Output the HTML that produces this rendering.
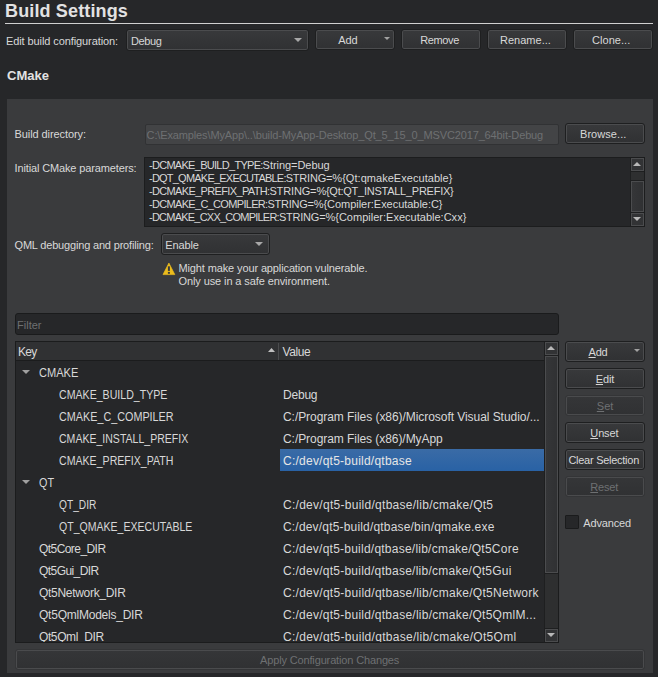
<!DOCTYPE html>
<html lang="en"><head><meta charset="utf-8"><title>Build Settings</title>
<style>
html,body{margin:0;padding:0;background:#262729;}
body{width:658px;height:677px;position:relative;overflow:hidden;font-family:"Liberation Sans",sans-serif;}
div,svg{position:absolute;box-sizing:border-box;}
.t{white-space:pre;}
.t u{text-decoration:underline;text-underline-offset:1px;}
.btn{border:1px solid #1e1f20;border-radius:3px;background:linear-gradient(#38393b,#303133);box-shadow:inset 0 0 0 1px #4b4c4e;}
  .btn.dis{border-color:#343537;background:linear-gradient(#353638,#303133);box-shadow:inset 0 0 0 1px #4a4b4d;}
.le{border:1px solid #1a1b1c;border-radius:2px;background:#262729;}
.le.dis{border-color:#313234;background:#434446;}
.ta{border:1px solid #1c1d1e;background:#262729;}
.flt{border:1px solid #1a1b1c;border-radius:3px;background:#262729;}
.tree{border:1px solid #1b1c1d;background:#262729;}
.clip{overflow:hidden;}
.sbt{background:#2e2f30;border-left:1px solid #1f2021;}
.sbb{background:#323335;border:1px solid #4b4c4e;}
.sbh{background:linear-gradient(90deg,#353638,#303133);border:1px solid #4b4c4e;}
.cb{border:1px solid #1a1b1c;background:#262729;border-radius:1px;}
</style></head>
<body>
<div class="t" style="left:5px;top:0.36px;font-size:18px;line-height:22px;height:22px;color:#e2e2e2;font-weight:bold;letter-spacing:0.143px;">Build Settings</div>
<div class="r" style="left:5px;top:23px;width:648px;height:1px;background:#d0d0d0"></div>
<div class="t" style="left:6px;top:33.69px;font-size:11px;line-height:15px;height:15px;color:#d8d8d8;letter-spacing:-0.094px;">Edit build configuration:</div>
<div class="btn" style="left:126px;top:29px;width:183px;height:22px;"></div>
<div class="t" style="left:131px;top:33.69px;font-size:11px;line-height:15px;height:15px;color:#d8d8d8;letter-spacing:-0.383px;">Debug</div>
<svg class="a" style="left:294px;top:38px" width="8" height="4" viewBox="0 0 8 4"><polygon points="0,0 8,0 4.0,4" fill="#a8a8a8"/></svg>
<div class="btn" style="left:315px;top:29px;width:80px;height:21px;"></div>
<div class="t" style="left:338.2px;top:32.69px;font-size:11px;line-height:15px;height:15px;color:#d8d8d8;letter-spacing:-0.024px;">Add</div>
<svg class="a" style="left:384px;top:37px" width="6" height="3" viewBox="0 0 6 3"><polygon points="0,0 6,0 3.0,3" fill="#a2a2a2"/></svg>
<div class="btn" style="left:401px;top:29px;width:80px;height:21px;"></div>
<div class="t" style="left:420.3px;top:32.69px;font-size:11px;line-height:15px;height:15px;color:#d8d8d8;letter-spacing:-0.393px;">Remove</div>
<div class="btn" style="left:487px;top:29px;width:80px;height:21px;"></div>
<div class="t" style="left:500px;top:32.69px;font-size:11px;line-height:15px;height:15px;color:#d8d8d8;letter-spacing:0.017px;">Rename...</div>
<div class="btn" style="left:573px;top:29px;width:80px;height:21px;"></div>
<div class="t" style="left:592px;top:32.69px;font-size:11px;line-height:15px;height:15px;color:#d8d8d8;letter-spacing:0.049px;">Clone...</div>
<div class="t" style="left:7px;top:67.00px;font-size:13px;line-height:17px;height:17px;color:#e2e2e2;font-weight:bold;letter-spacing:0.018px;">CMake</div>
<div class="r" style="left:7px;top:99px;width:646px;height:574px;background:#3a3b3d"></div>
<div class="t" style="left:14.5px;top:126.69px;font-size:11px;line-height:15px;height:15px;color:#d8d8d8;letter-spacing:-0.078px;">Build directory:</div>
<div class="le dis" style="left:145px;top:124px;width:414px;height:21px;"></div>
<div class="t" style="left:146.6px;top:127.69px;font-size:11px;line-height:15px;height:15px;color:#6e7072;letter-spacing:-0.134px;">C:\Examples\MyApp\..\build-MyApp-Desktop_Qt_5_15_0_MSVC2017_64bit-Debug</div>
<div class="btn" style="left:565px;top:123px;width:80px;height:21px;"></div>
<div class="t" style="left:580px;top:126.69px;font-size:11px;line-height:15px;height:15px;color:#d8d8d8;letter-spacing:0.061px;">Browse...</div>
<div class="t" style="left:14.5px;top:160.69px;font-size:11px;line-height:15px;height:15px;color:#d8d8d8;letter-spacing:-0.133px;">Initial CMake parameters:</div>
<div class="ta" style="left:144px;top:157px;width:501px;height:70px;"></div>
<div class="t" style="left:149px;top:157.69px;font-size:11px;line-height:15px;height:15px;color:#d8d8d8;"><span style="letter-spacing:-0.713px">-DCMAKE_BUILD_TYPE:</span><span style="letter-spacing:-0.048px">String=Debug</span></div>
<div class="t" style="left:149px;top:170.69px;font-size:11px;line-height:15px;height:15px;color:#d8d8d8;"><span style="letter-spacing:-0.779px">-DQT_QMAKE_EXECUTABLE:</span><span style="letter-spacing:-0.197px">STRING=</span><span style="letter-spacing:0.041px">%{Qt:qmakeExecutable}</span></div>
<div class="t" style="left:149px;top:183.69px;font-size:11px;line-height:15px;height:15px;color:#d8d8d8;"><span style="letter-spacing:-0.653px">-DCMAKE_PREFIX_PATH:</span><span style="letter-spacing:-0.140px">STRING=</span><span style="letter-spacing:-0.250px">%{Qt:QT_INSTALL_PREFIX}</span></div>
<div class="t" style="left:149px;top:196.69px;font-size:11px;line-height:15px;height:15px;color:#d8d8d8;"><span style="letter-spacing:-0.680px">-DCMAKE_C_COMPILER:</span><span style="letter-spacing:-0.254px">STRING=</span><span style="letter-spacing:-0.034px">%{Compiler:Executable:C}</span></div>
<div class="t" style="left:149px;top:209.69px;font-size:11px;line-height:15px;height:15px;color:#d8d8d8;"><span style="letter-spacing:-0.771px">-DCMAKE_CXX_COMPILER:</span><span style="letter-spacing:-0.211px">STRING=</span><span style="letter-spacing:0.011px">%{Compiler:Executable:Cxx}</span></div>
<div class="r" style="left:630px;top:158px;width:1px;height:68px;background:#1e1f20"></div>
<div class="r" style="left:631px;top:158px;width:13px;height:68px;background:#2e2f30"></div>
<div class="sbb" style="left:631px;top:158px;width:13px;height:13px;"></div>
<svg class="a" style="left:633px;top:162px" width="8" height="4" viewBox="0 0 8 4"><polygon points="0,4 4.0,0 8,4" fill="#b8b8b8"/></svg>
<div class="r" style="left:631px;top:171px;width:13px;height:1px;background:#1e1f20"></div>
<div class="r" style="left:631px;top:180px;width:13px;height:1px;background:#1e1f20"></div>
<div class="sbh" style="left:631px;top:181px;width:13px;height:31px;"></div>
<div class="r" style="left:631px;top:212px;width:13px;height:1px;background:#1e1f20"></div>
<div class="r" style="left:631px;top:212px;width:13px;height:1px;background:#1e1f20"></div>
<div class="sbb" style="left:631px;top:213px;width:13px;height:13px;"></div>
<svg class="a" style="left:633px;top:217px" width="8" height="4" viewBox="0 0 8 4"><polygon points="0,0 8,0 4.0,4" fill="#b8b8b8"/></svg>
<div class="t" style="left:14.5px;top:238.09px;font-size:11px;line-height:15px;height:15px;color:#d8d8d8;letter-spacing:-0.175px;">QML debugging and profiling:</div>
<div class="btn" style="left:161px;top:233px;width:109px;height:22px;"></div>
<div class="t" style="left:165.3px;top:238.09px;font-size:11px;line-height:15px;height:15px;color:#d8d8d8;letter-spacing:-0.125px;">Enable</div>
<svg class="a" style="left:255px;top:242px" width="8" height="4" viewBox="0 0 8 4"><polygon points="0,0 8,0 4.0,4" fill="#a8a8a8"/></svg>
<svg class="a" style="left:162px;top:262px" width="14" height="14" viewBox="0 0 14 14"><polygon points="6.9,1.1 12.8,12.6 1.0,12.6" fill="#ecbc1c" stroke="#ecbc1c" stroke-width="0.7" stroke-linejoin="round"/><rect x="5.9" y="4.3" width="2" height="4.6" fill="#3a3b3d"/><rect x="5.9" y="9.9" width="2" height="1.9" fill="#3a3b3d"/></svg>
<div class="t" style="left:178.5px;top:260.69px;font-size:11px;line-height:15px;height:15px;color:#d8d8d8;letter-spacing:-0.124px;">Might make your application vulnerable.</div>
<div class="t" style="left:178.5px;top:273.69px;font-size:11px;line-height:15px;height:15px;color:#d8d8d8;letter-spacing:-0.103px;">Only use in a safe environment.</div>
<div class="flt" style="left:15px;top:313px;width:544px;height:22px;"></div>
<div class="t" style="left:17.1px;top:318.09px;font-size:11px;line-height:15px;height:15px;color:#6e7072;letter-spacing:-0.007px;">Filter</div>
<div class="tree" style="left:15px;top:341px;width:544px;height:302px;"></div>
<div class="r" style="left:16px;top:342px;width:528px;height:18px;background:#303133"></div>
<div class="r" style="left:16px;top:360px;width:543px;height:1px;background:#1b1c1d"></div>
<div class="r" style="left:278px;top:343px;width:1px;height:17px;background:#4a4b4d"></div>
<div class="t" style="left:18px;top:343.84px;font-size:12px;line-height:16px;height:16px;color:#d8d8d8;letter-spacing:-0.659px;">Key</div>
<div class="t" style="left:282.5px;top:343.84px;font-size:12px;line-height:16px;height:16px;color:#d8d8d8;letter-spacing:-0.420px;">Value</div>
<svg class="a" style="left:268px;top:348px" width="7" height="4" viewBox="0 0 7 4"><polygon points="0,4 3.5,0 7,4" fill="#c0c0c0"/></svg>
<div class="clip" style="left:16px;top:361px;width:528px;height:281px">
<div class="t" style="left:23px;top:4.44px;font-size:12px;line-height:16px;height:16px;color:#d8d8d8;transform:scaleX(0.9233);transform-origin:0 50%;">CMAKE</div>
<svg class="a" style="left:6px;top:9px" width="8" height="4" viewBox="0 0 8 4"><polygon points="0,0 8,0 4.0,4" fill="#a0a0a0"/></svg>
<div class="t" style="left:43px;top:26.44px;font-size:12px;line-height:16px;height:16px;color:#d8d8d8;transform:scaleX(0.8834);transform-origin:0 50%;">CMAKE_BUILD_TYPE</div>
<div class="t" style="left:267px;top:26.44px;font-size:12px;line-height:16px;height:16px;color:#d8d8d8;letter-spacing:-0.212px;">Debug</div>
<div class="t" style="left:43px;top:48.44px;font-size:12px;line-height:16px;height:16px;color:#d8d8d8;transform:scaleX(0.8998);transform-origin:0 50%;">CMAKE_C_COMPILER</div>
<div class="t" style="left:267px;top:48.44px;font-size:12px;line-height:16px;height:16px;color:#d8d8d8;letter-spacing:-0.054px;">C:/Program Files (x86)/Microsoft Visual Studio/...</div>
<div class="t" style="left:43px;top:70.44px;font-size:12px;line-height:16px;height:16px;color:#d8d8d8;transform:scaleX(0.8780);transform-origin:0 50%;">CMAKE_INSTALL_PREFIX</div>
<div class="t" style="left:267px;top:70.44px;font-size:12px;line-height:16px;height:16px;color:#d8d8d8;letter-spacing:-0.060px;">C:/Program Files (x86)/MyApp</div>
<div class="r" style="left:264px;top:88px;width:264px;height:22px;background:linear-gradient(#3a6ba6,#2962a5)"></div>
<div class="t" style="left:43px;top:92.44px;font-size:12px;line-height:16px;height:16px;color:#d8d8d8;transform:scaleX(0.8828);transform-origin:0 50%;">CMAKE_PREFIX_PATH</div>
<div class="t" style="left:267px;top:92.44px;font-size:12px;line-height:16px;height:16px;color:#e6e6e6;letter-spacing:0.239px;">C:/dev/qt5-build/qtbase</div>
<div class="t" style="left:23px;top:114.44px;font-size:12px;line-height:16px;height:16px;color:#d8d8d8;transform:scaleX(0.9001);transform-origin:0 50%;">QT</div>
<svg class="a" style="left:6px;top:119px" width="8" height="4" viewBox="0 0 8 4"><polygon points="0,0 8,0 4.0,4" fill="#a0a0a0"/></svg>
<div class="t" style="left:43px;top:136.44px;font-size:12px;line-height:16px;height:16px;color:#d8d8d8;transform:scaleX(0.8499);transform-origin:0 50%;">QT_DIR</div>
<div class="t" style="left:267px;top:136.44px;font-size:12px;line-height:16px;height:16px;color:#d8d8d8;letter-spacing:0.276px;">C:/dev/qt5-build/qtbase/lib/cmake/Qt5</div>
<div class="t" style="left:43px;top:158.44px;font-size:12px;line-height:16px;height:16px;color:#d8d8d8;transform:scaleX(0.8787);transform-origin:0 50%;">QT_QMAKE_EXECUTABLE</div>
<div class="t" style="left:267px;top:158.44px;font-size:12px;line-height:16px;height:16px;color:#d8d8d8;letter-spacing:0.181px;">C:/dev/qt5-build/qtbase/bin/qmake.exe</div>
<div class="t" style="left:23px;top:180.44px;font-size:12px;line-height:16px;height:16px;color:#d8d8d8;letter-spacing:-0.563px;">Qt5Core_DIR</div>
<div class="t" style="left:267px;top:180.44px;font-size:12px;line-height:16px;height:16px;color:#d8d8d8;letter-spacing:0.236px;">C:/dev/qt5-build/qtbase/lib/cmake/Qt5Core</div>
<div class="t" style="left:23px;top:202.44px;font-size:12px;line-height:16px;height:16px;color:#d8d8d8;letter-spacing:-0.566px;">Qt5Gui_DIR</div>
<div class="t" style="left:267px;top:202.44px;font-size:12px;line-height:16px;height:16px;color:#d8d8d8;letter-spacing:0.246px;">C:/dev/qt5-build/qtbase/lib/cmake/Qt5Gui</div>
<div class="t" style="left:23px;top:224.44px;font-size:12px;line-height:16px;height:16px;color:#d8d8d8;letter-spacing:-0.299px;">Qt5Network_DIR</div>
<div class="t" style="left:267px;top:224.44px;font-size:12px;line-height:16px;height:16px;color:#d8d8d8;letter-spacing:0.266px;">C:/dev/qt5-build/qtbase/lib/cmake/Qt5Network</div>
<div class="t" style="left:23px;top:246.44px;font-size:12px;line-height:16px;height:16px;color:#d8d8d8;letter-spacing:-0.235px;">Qt5QmlModels_DIR</div>
<div class="t" style="left:267px;top:246.44px;font-size:12px;line-height:16px;height:16px;color:#d8d8d8;letter-spacing:0.257px;">C:/dev/qt5-build/qtbase/lib/cmake/Qt5QmlM...</div>
<div class="t" style="left:23px;top:268.44px;font-size:12px;line-height:16px;height:16px;color:#d8d8d8;letter-spacing:-0.398px;">Qt5Qml_DIR</div>
<div class="t" style="left:267px;top:268.44px;font-size:12px;line-height:16px;height:16px;color:#d8d8d8;letter-spacing:0.282px;">C:/dev/qt5-build/qtbase/lib/cmake/Qt5Qml</div>
</div>
<div class="r" style="left:544px;top:342px;width:1px;height:300px;background:#1e1f20"></div>
<div class="r" style="left:545px;top:342px;width:13px;height:300px;background:#2e2f30"></div>
<div class="sbb" style="left:545px;top:342px;width:13px;height:13px;"></div>
<svg class="a" style="left:547px;top:346px" width="8" height="4" viewBox="0 0 8 4"><polygon points="0,4 4.0,0 8,4" fill="#b8b8b8"/></svg>
<div class="r" style="left:545px;top:355px;width:13px;height:1px;background:#1e1f20"></div>
<div class="r" style="left:545px;top:355px;width:13px;height:1px;background:#1e1f20"></div>
<div class="sbh" style="left:545px;top:356px;width:13px;height:217px;"></div>
<div class="r" style="left:545px;top:573px;width:13px;height:1px;background:#1e1f20"></div>
<div class="r" style="left:545px;top:628px;width:13px;height:1px;background:#1e1f20"></div>
<div class="sbb" style="left:545px;top:629px;width:13px;height:13px;"></div>
<svg class="a" style="left:547px;top:633px" width="8" height="4" viewBox="0 0 8 4"><polygon points="0,0 8,0 4.0,4" fill="#b8b8b8"/></svg>
<div class="btn" style="left:565px;top:341px;width:80px;height:21px;"></div>
<div class="t" style="left:588.5px;top:344.69px;font-size:11px;line-height:15px;height:15px;color:#d8d8d8;letter-spacing:-0.191px;"><u>A</u>dd</div>
<svg class="a" style="left:634px;top:349px" width="6" height="3" viewBox="0 0 6 3"><polygon points="0,0 6,0 3.0,3" fill="#a2a2a2"/></svg>
<div class="btn" style="left:565px;top:368px;width:80px;height:21px;"></div>
<div class="t" style="left:595.8px;top:371.69px;font-size:11px;line-height:15px;height:15px;color:#d8d8d8;letter-spacing:-0.114px;"><u>E</u>dit</div>
<div class="btn dis" style="left:565px;top:395px;width:80px;height:21px;"></div>
<div class="t" style="left:596.8px;top:398.69px;font-size:11px;line-height:15px;height:15px;color:#6e7072;letter-spacing:-0.004px;"><u>S</u>et</div>
<div class="btn" style="left:565px;top:422px;width:80px;height:21px;"></div>
<div class="t" style="left:590.3px;top:425.69px;font-size:11px;line-height:15px;height:15px;color:#d8d8d8;letter-spacing:-0.127px;"><u>U</u>nset</div>
<div class="btn" style="left:565px;top:449px;width:80px;height:21px;"></div>
<div class="t" style="left:568.4px;top:452.69px;font-size:11px;line-height:15px;height:15px;color:#d8d8d8;letter-spacing:-0.266px;">Clear Selection</div>
<div class="btn dis" style="left:565px;top:476px;width:80px;height:21px;"></div>
<div class="t" style="left:590.3px;top:479.69px;font-size:11px;line-height:15px;height:15px;color:#6e7072;letter-spacing:-0.207px;"><u>R</u>eset</div>
<div class="cb" style="left:565px;top:515px;width:14px;height:14px;"></div>
<div class="t" style="left:583.3px;top:516.09px;font-size:11px;line-height:15px;height:15px;color:#d8d8d8;letter-spacing:-0.166px;">Advanced</div>
<div class="btn dis" style="left:15px;top:649px;width:630px;height:21px;"></div>
<div class="t" style="left:260px;top:652.69px;font-size:11px;line-height:15px;height:15px;color:#6e7072;letter-spacing:-0.144px;">Apply Configuration Changes</div>
</body></html>
